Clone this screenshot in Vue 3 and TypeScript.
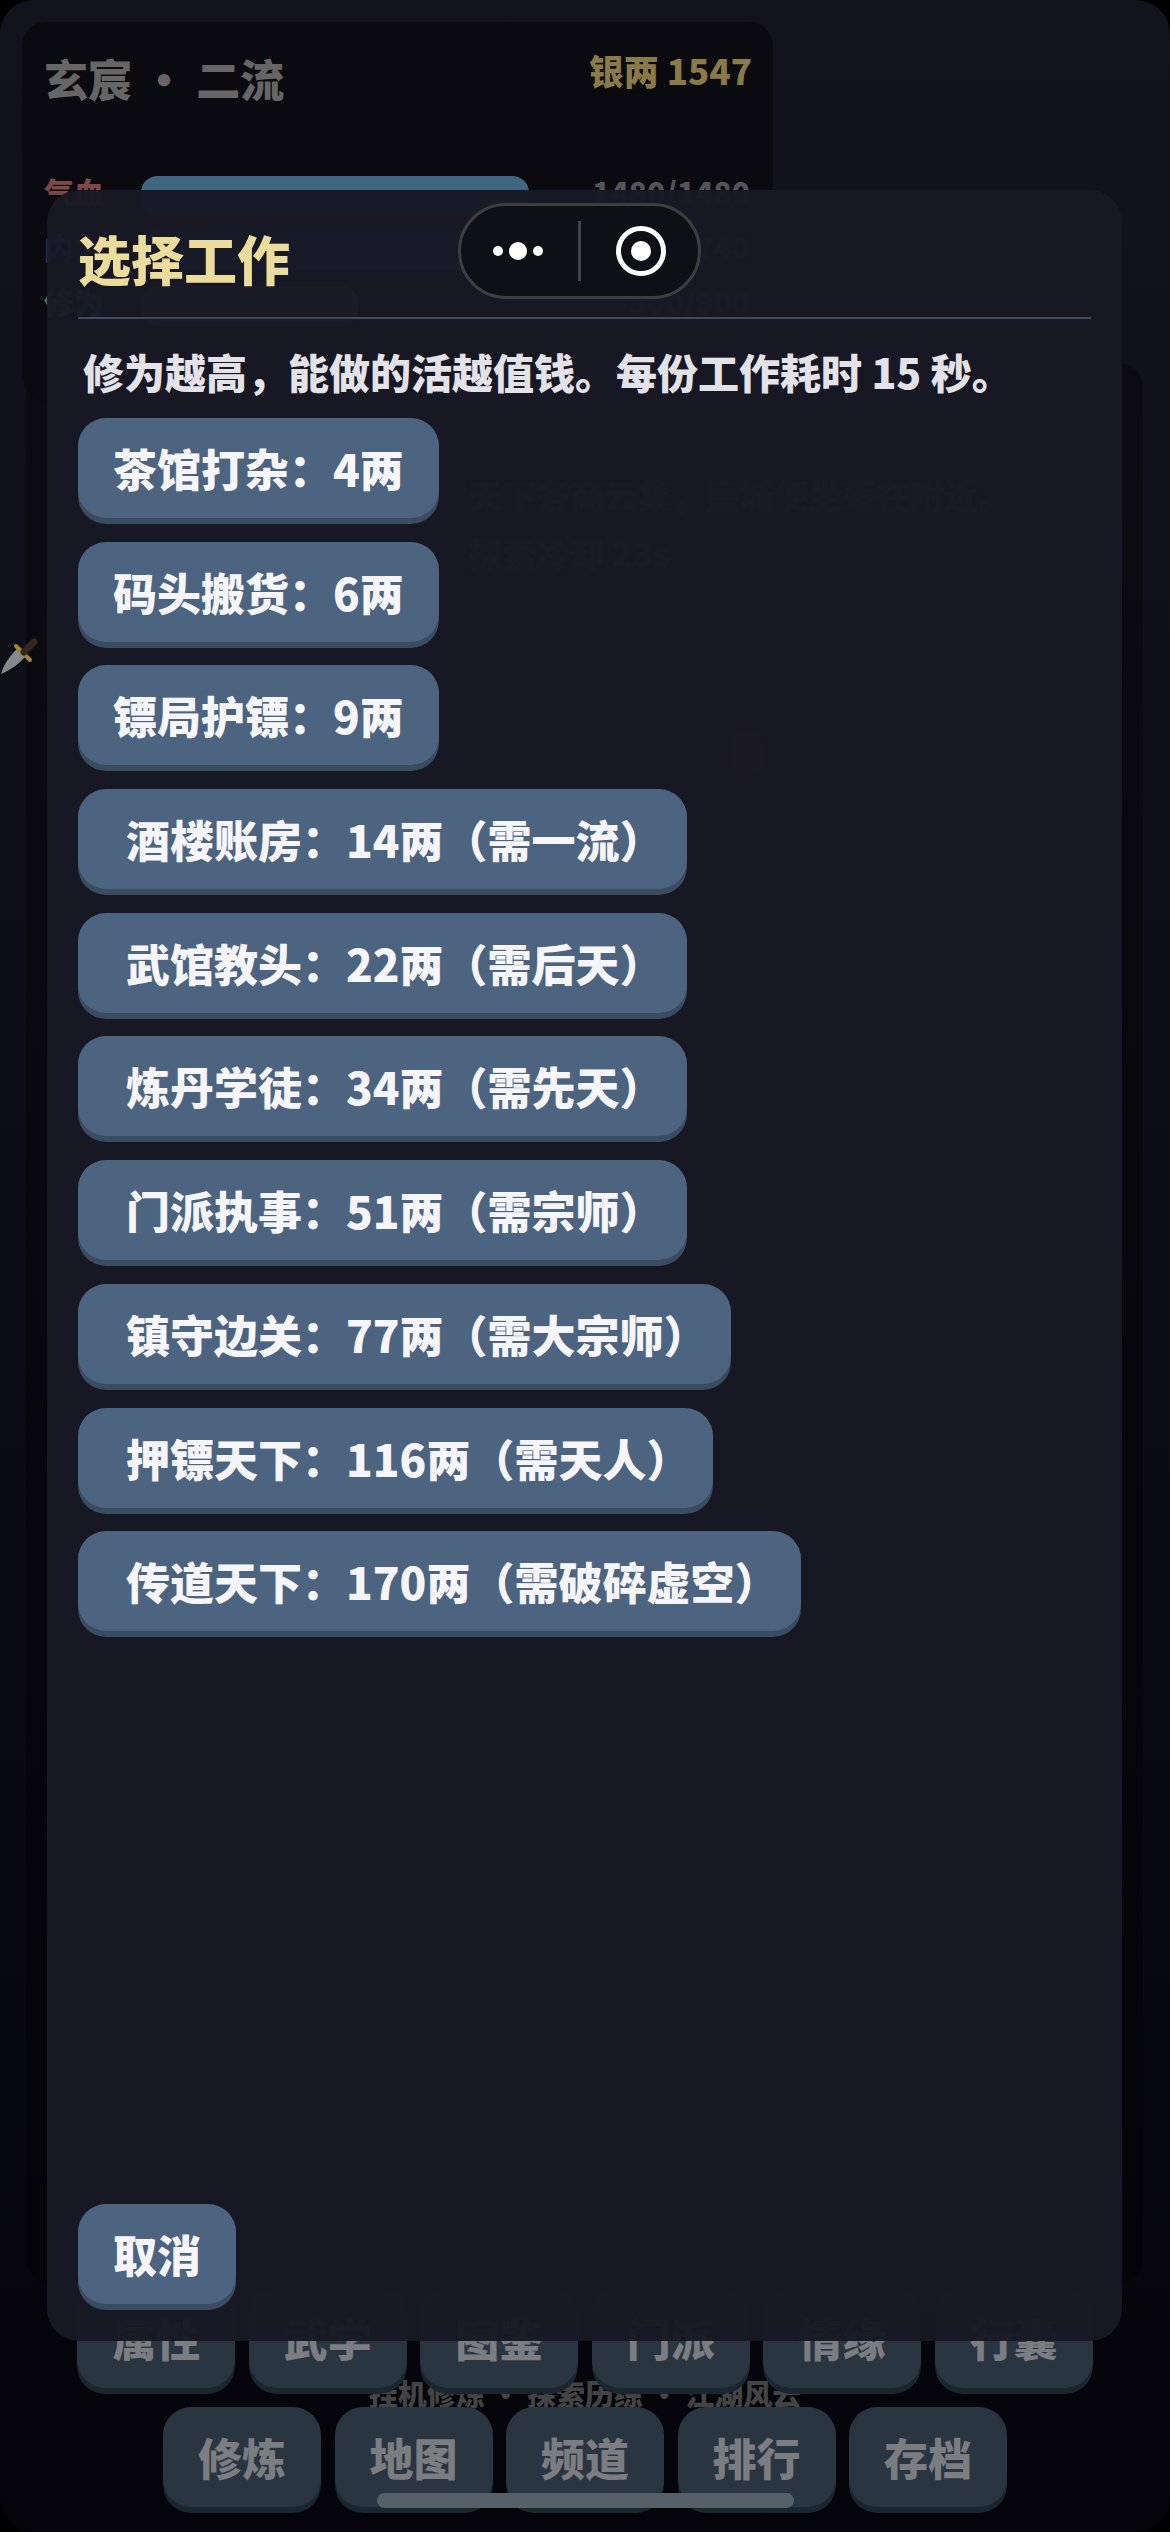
<template>
  <div class="page">
    <section class="status-panel">
      <div class="status-head">
        <span class="hero-name">玄宸 · 二流</span>
        <span class="hero-money">银两 1547</span>
      </div>
      <div v-for="row in statRows" :key="row.label" class="stat-row">
        <span class="stat-label" :class="row.tone">{{ row.label }}</span>
        <div class="stat-track">
          <div class="stat-fill" :class="row.tone" :style="{ width: row.percent + '%' }"></div>
        </div>
        <span class="stat-value">{{ row.value }}</span>
      </div>
    </section>

    <section class="scene-panel">
      <p class="scene-line">天下各商云集，皇城便坐落在附近。</p>
      <p class="scene-line">探索冷却 23s</p>
      <div class="scene-card scene-card-wide">
        <span class="scene-mark"></span>
      </div>
      <div class="scene-card scene-card-narrow">
        <span class="scene-mark scene-mark-red"></span>
      </div>
    </section>

    <nav class="bottom-nav">
      <div class="nav-row">
        <button v-for="item in navTop" :key="item" class="nav-btn">{{ item }}</button>
      </div>
      <div class="nav-tagline">挂机修炼 · 探索历练 · 江湖风云</div>
      <div class="nav-row">
        <button v-for="item in navBottom" :key="item" class="nav-btn">{{ item }}</button>
      </div>
    </nav>

    <svg class="dagger" width="40" height="46" viewBox="0 0 40 46">
      <path d="M1 39 C4 28 11 20 17 14 L25 22 C19 29 10 35 1 39 Z" fill="#858a8a" />
      <path d="M16 11 L30 25" stroke="#a8842f" stroke-width="4" stroke-linecap="round" />
      <path d="M24 17 L34 7" stroke="#35261f" stroke-width="7" stroke-linecap="round" />
    </svg>

    <div class="work-modal">
      <h2 class="work-title">选择工作</h2>
      <p class="work-desc">修为越高，能做的活越值钱。每份工作耗时 15 秒。</p>
      <div class="work-list">
        <button
          v-for="job in jobs"
          :key="job.label"
          class="work-btn"
          :class="{ 'work-btn-note': job.note }"
        >
          {{ job.label }}
        </button>
      </div>
      <button class="work-btn cancel-btn">取消</button>
    </div>

    <div class="capsule">
      <svg class="capsule-more" width="60" height="20" viewBox="0 0 60 20">
        <circle cx="10" cy="10" r="5" fill="#fff" />
        <circle cx="30" cy="10" r="9" fill="#fff" />
        <circle cx="50" cy="10" r="5" fill="#fff" />
      </svg>
      <span class="capsule-line"></span>
      <svg class="capsule-close" width="50" height="50" viewBox="0 0 50 50">
        <circle cx="25" cy="25" r="22.5" fill="none" stroke="#fff" stroke-width="5" />
        <circle cx="25" cy="25" r="10" fill="#fff" />
      </svg>
    </div>

    <div class="home-bar"></div>
  </div>
</template>

<script setup lang="ts">
interface StatRow {
  label: string
  value: string
  percent: number
  tone: string
}

interface Job {
  label: string
  note: boolean
}

const statRows: StatRow[] = [
  { label: '气血', value: '1480/1480', percent: 100, tone: 'tone-red' },
  { label: '内力', value: '740/740', percent: 100, tone: 'tone-blue' },
  { label: '修为', value: '500/900', percent: 56, tone: 'tone-green' }
]

const navTop = ['属性', '武学', '图鉴', '门派', '情缘', '行囊']
const navBottom = ['修炼', '地图', '频道', '排行', '存档']

const jobs: Job[] = [
  { label: '茶馆打杂：4两', note: false },
  { label: '码头搬货：6两', note: false },
  { label: '镖局护镖：9两', note: false },
  { label: '酒楼账房：14两（需一流）', note: true },
  { label: '武馆教头：22两（需后天）', note: true },
  { label: '炼丹学徒：34两（需先天）', note: true },
  { label: '门派执事：51两（需宗师）', note: true },
  { label: '镇守边关：77两（需大宗师）', note: true },
  { label: '押镖天下：116两（需天人）', note: true },
  { label: '传道天下：170两（需破碎虚空）', note: true }
]
</script>

<style>
html,
body {
  margin: 0;
  background: #000;
}
</style>

<style scoped>
.page {
  position: relative;
  width: 1170px;
  height: 2532px;
  box-sizing: border-box;
  display: flex;
  flex-direction: column;
  overflow: hidden;
  border-radius: 34px;
  padding-bottom: 19px;
  background: linear-gradient(#13131c, #04040a);
  font-family: "Noto Sans CJK SC", "Noto Sans", sans-serif;
  font-weight: 900;
}

.status-panel {
  position: relative;
  z-index: 1;
  width: 751px;
  height: 381px;
  box-sizing: border-box;
  margin: 22px 0 0 22px;
  padding: 24px 23px 24px 22px;
  background: #0a0a0f;
  border-radius: 24px 24px 30px 30px;
}

.status-head {
  height: 130px;
  display: flex;
  justify-content: space-between;
  align-items: flex-start;
}

.hero-name {
  font-size: 44px;
  line-height: 64px;
  color: #666;
}

.hero-money {
  margin-right: -2px;
  font-size: 35px;
  line-height: 48px;
  color: #8a7a48;
}

.stat-row {
  height: 40px;
  margin-bottom: 15px;
  display: flex;
  align-items: flex-start;
}

.stat-label {
  width: 97px;
  font-size: 30px;
  line-height: 30px;
}

.stat-label.tone-red {
  color: #7a4a48;
}

.stat-label.tone-blue {
  color: #465a78;
}

.stat-label.tone-green {
  color: #4f7a4c;
}

.stat-track {
  width: 388px;
  height: 40px;
  border-radius: 16px;
  overflow: hidden;
}

.stat-fill {
  height: 100%;
  border-radius: 16px;
}

.stat-fill.tone-red {
  background: #3f6880;
}

.stat-fill.tone-blue {
  background: #35506e;
}

.stat-fill.tone-green {
  background: #3d6650;
}

.stat-value {
  flex: 1;
  text-align: right;
  font-size: 30px;
  line-height: 30px;
  color: #555;
}

.scene-panel {
  flex: 1;
  margin: -40px 27px 5px 26px;
  padding-top: 107px;
  background: rgba(0, 0, 0, 0.3);
  border-radius: 24px;
}

.scene-line {
  margin: 0 0 8px 442px;
  font-size: 34px;
  line-height: 50px;
  color: #555;
}

.scene-card {
  margin-right: 28px;
  border-radius: 24px;
  background: #101017;
}

.scene-card-wide {
  height: 97px;
  margin-top: 4px;
  margin-left: 20px;
  padding-left: 425px;
  padding-top: 25px;
  box-sizing: border-box;
}

.scene-card-narrow {
  width: 526px;
  height: 100px;
  margin-top: 20px;
  margin-left: auto;
  padding-left: 143px;
  padding-top: 28px;
  box-sizing: border-box;
}

.scene-mark {
  display: block;
  width: 30px;
  height: 45px;
  border-radius: 14px;
  background: #05050a;
}

.scene-mark-red {
  background: #5a1c28;
}

.bottom-nav {
  display: flex;
  flex-direction: column;
}

.nav-row {
  position: relative;
  z-index: 1;
  display: flex;
  justify-content: center;
  gap: 13.5px;
}

.nav-btn {
  width: 158px;
  height: 100px;
  margin-bottom: 6px;
  padding: 0;
  border: 0;
  border-radius: 28px;
  background: #2a3542;
  box-shadow: 0 6px 0 #1b2730;
  color: #7b7d80;
  font: inherit;
  font-size: 44px;
}

.nav-tagline {
  margin: -20px 0 -5px;
  text-align: center;
  font-size: 29px;
  line-height: 38px;
  color: #444;
}

.dagger {
  position: absolute;
  z-index: 2;
  left: 0;
  top: 635px;
}

.work-modal {
  position: absolute;
  z-index: 3;
  left: 47px;
  top: 190px;
  width: 1075px;
  height: 2151px;
  box-sizing: border-box;
  display: flex;
  flex-direction: column;
  align-items: flex-start;
  padding: 0 31px 31px;
  border-radius: 32px;
  background: rgba(25, 25, 37, 0.97);
}

.work-title {
  align-self: stretch;
  margin: 0;
  padding-top: 30px;
  height: 129px;
  box-sizing: border-box;
  border-bottom: 2px solid #3b4c60;
  font-size: 53px;
  line-height: 76px;
  font-weight: 900;
  color: #ecdc9c;
}

.work-desc {
  margin: 24px 0 0 5px;
  font-size: 41px;
  line-height: 56px;
  color: #e2e2e8;
}

.work-list {
  flex: 1;
  margin-top: 19px;
  display: flex;
  flex-direction: column;
  align-items: flex-start;
  gap: 23.7px;
}

.work-btn {
  height: 100px;
  padding: 0 35px;
  border: 0;
  border-radius: 28px;
  background: #4d6480;
  box-shadow: 0 6px 0 #3a4c60;
  color: #f5f5fa;
  font: inherit;
  font-size: 44px;
  white-space: nowrap;
}

.work-btn-note {
  padding: 0 23px 0 48px;
}

.cancel-btn {
  padding: 0 35px;
  margin-bottom: 6px;
}

.capsule {
  position: absolute;
  z-index: 4;
  left: 458px;
  top: 203px;
  width: 243px;
  height: 96px;
  box-sizing: border-box;
  display: flex;
  align-items: center;
  padding-left: 10px;
  border: 3px solid #3e3e42;
  border-radius: 48px;
  background: #0f1016;
}

.capsule-more {
  margin-left: 17px;
  flex-shrink: 0;
}

.capsule-line {
  width: 3px;
  height: 60px;
  margin-left: 30px;
  background: #444;
}

.capsule-close {
  margin-left: 35px;
  flex-shrink: 0;
}

.home-bar {
  position: absolute;
  z-index: 5;
  left: 377px;
  top: 2493px;
  width: 417px;
  height: 15px;
  border-radius: 8px;
  background: #566069;
}
</style>
